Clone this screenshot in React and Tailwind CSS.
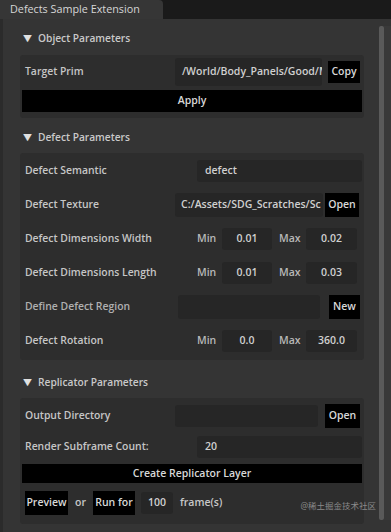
import React from "react";

const font = { fontFamily: "'Open Sans', 'Noto Sans CJK SC', sans-serif" };

const Header = ({ title }) => (
  <div className="flex items-center h-[20px] pl-[20px] gap-[6px] text-[#c9c9c9] text-[10.2px] font-semibold">
    <span className="text-[9px] text-[#e0e0e0]">▼</span>
    <span>{title}</span>
  </div>
);

const Btn = ({ children, className = "" }) => (
  <div className={`flex items-center justify-center bg-black text-[#d8d8d8] text-[10.5px] font-semibold ${className}`}>
    {children}
  </div>
);

const Label = ({ children, dim }) => (
  <div className={`w-[150px] shrink-0 text-[10.4px] font-semibold ${dim ? "text-[#b0b0b0]" : "text-[#c6c6c6]"}`}>
    {children}
  </div>
);

const Field = ({ children, className = "" }) => (
  <div className={`flex items-center bg-[#262626] rounded-[3px] text-[#d0d0d0] text-[10.5px] font-semibold overflow-hidden whitespace-nowrap ${className}`}>
    {children}
  </div>
);

const MinMax = ({ label, min, max }) => (
  <div className="flex items-center h-[24px]">
    <Label>{label}</Label>
    <span className="ml-[22px] w-[25px] text-[10.5px] font-semibold text-[#b8b8b8]">Min</span>
    <Field className="w-[50px] h-[22px] justify-center">{min}</Field>
    <span className="ml-[7px] w-[27px] text-[10.5px] font-semibold text-[#b8b8b8]">Max</span>
    <Field className="w-[51px] h-[22px] justify-center">{max}</Field>
  </div>
);

export default function App() {
  return (
    <div className="w-[391px] h-[532px] bg-[#1a1a1a] flex flex-col overflow-hidden" style={font}>
      <div className="h-[19px] flex shrink-0">
        <div className="w-[163px] bg-[#363636] rounded-tr-[4px] flex items-center pl-[10px] text-[10.8px] text-[#d6d6d6]">
          Defects Sample Extension
        </div>
      </div>
      <div className="flex-1 flex bg-[#343434] border-l-[3px] border-[#2b2b2b]">
        <div className="flex-1 flex flex-col pl-[17px] pr-[15px] pt-[10px]">
          <div className="-ml-[17px]">
            <Header title="Object Parameters" />
          </div>
          <div className="mt-[6px] bg-[#2d2d2d] rounded-[3px] h-[63px] px-[2px] pt-[3px] flex flex-col">
            <div className="flex items-center h-[28px] pl-[3px]">
              <Label>Target Prim</Label>
              <Field className="w-[147px] h-[28px] pl-[7px]">/World/Body_Panels/Good/M</Field>
              <Btn className="ml-[6px] w-[32px] h-[22px]">Copy</Btn>
            </div>
            <Btn className="mt-[4px] h-[22px] w-[340px]">Apply</Btn>
          </div>

          <div className="-ml-[17px] mt-[10px]">
            <Header title="Defect Parameters" />
          </div>
          <div className="mt-[5px] bg-[#2d2d2d] rounded-[3px] h-[207px] pl-[5px] pt-[6px] flex flex-col gap-[10px]">
            <div className="flex items-center h-[24px]">
              <Label>Defect Semantic</Label>
              <Field className="ml-[22px] w-[165px] h-[22px] pl-[8px]">defect</Field>
            </div>
            <div className="flex items-center h-[24px]">
              <Label>Defect Texture</Label>
              <Field className="w-[148px] h-[24px] pl-[6px]">C:/Assets/SDG_Scratches/Sc</Field>
              <Btn className="ml-[2px] w-[34px] h-[24px]">Open</Btn>
            </div>
            <MinMax label="Defect Dimensions Width" min="0.01" max="0.02" />
            <MinMax label="Defect Dimensions Length" min="0.01" max="0.03" />
            <div className="flex items-center h-[24px]">
              <Label dim>Define Defect Region</Label>
              <Field className="ml-[3px] w-[142px] h-[24px] bg-[#272a2d]"></Field>
              <Btn className="ml-[9px] w-[31px] h-[24px]">New</Btn>
            </div>
            <MinMax label="Defect Rotation" min="0.0" max="360.0" />
          </div>

          <div className="-ml-[17px] mt-[13px]">
            <Header title="Replicator Parameters" />
          </div>
          <div className="mt-[5px] bg-[#2d2d2d] rounded-[3px] h-[126px] px-[2px] pt-[6px] flex flex-col">
            <div className="flex items-center h-[24px] pl-[3px]">
              <Label>Output Directory</Label>
              <Field className="w-[143px] h-[22px]"></Field>
              <Btn className="ml-[7px] w-[35px] h-[24px]">Open</Btn>
            </div>
            <div className="flex items-center h-[22px] mt-[8px] pl-[3px]">
              <Label>Render Subframe Count:</Label>
              <Field className="ml-[22px] w-[165px] h-[22px] pl-[8px]">20</Field>
            </div>
            <Btn className="mt-[6px] h-[19px] w-[340px]">Create Replicator Layer</Btn>
            <div className="flex items-center h-[24px] mt-[8px] pl-[3px] text-[10.5px] font-semibold text-[#c8c8c8]">
              <Btn className="w-[43px] h-[24px]">Preview</Btn>
              <span className="ml-[7px]">or</span>
              <Btn className="ml-[7px] w-[42px] h-[24px]">Run for</Btn>
              <Field className="ml-[6px] w-[32px] h-[22px] justify-center bg-[#2a2a2a]">100</Field>
              <span className="ml-[7px]">frame(s)</span>
              <span className="ml-auto mr-[-14px] mt-[6px] text-[8.5px] font-normal text-[#8a8a8a]">@稀土掘金技术社区</span>
            </div>
          </div>
        </div>
        <div className="w-[18px] shrink-0 flex pt-[7px] pb-[12px]">
          <div className="w-[5px] bg-[#5a5a5a] rounded-[2px]"></div>
          <div className="flex-1 bg-[#393939]"></div>
        </div>
      </div>
    </div>
  );
}
